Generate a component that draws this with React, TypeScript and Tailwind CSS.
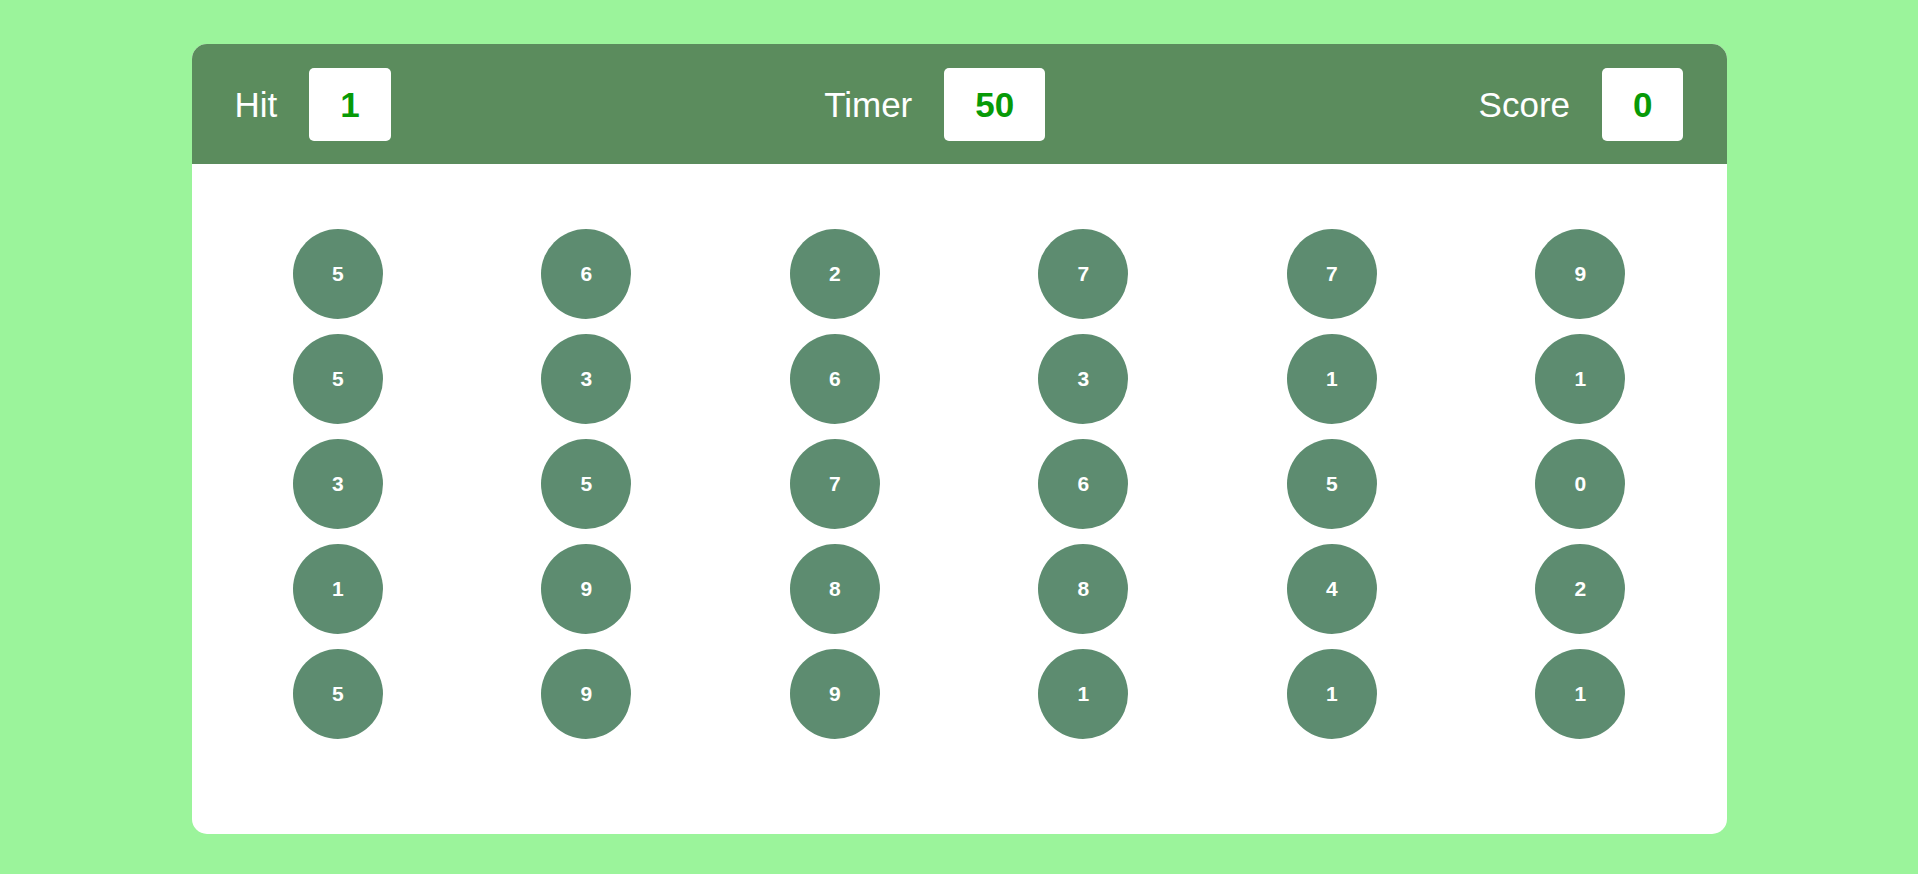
const bubbles = [
  5, 6, 2, 7, 7, 9,
  5, 3, 6, 3, 1, 1,
  3, 5, 7, 6, 5, 0,
  1, 9, 8, 8, 4, 2,
  5, 9, 9, 1, 1, 1,
];

function Stat({ label, value }: { label: string; value: string | number }) {
  return (
    <div className="flex items-center gap-[32px]">
      <span className="text-[35px] leading-none text-white">{label}</span>
      <div className="flex h-[73px] items-center rounded-[5px] bg-white px-[31px] text-[35px] font-bold leading-none text-[#079a07]">
        {value}
      </div>
    </div>
  );
}

export default function App() {
  return (
    <div
      className="flex min-h-[874px] w-full justify-center bg-[#9bf49b] pt-[44px]"
      style={{ fontFamily: '"Liberation Sans", Arial, sans-serif' }}
    >
      <div className="h-[790px] w-[1535px] overflow-hidden rounded-[15px] bg-white">
        {/* Top bar */}
        <div className="flex h-[120px] items-center justify-between bg-[#5b8c5d] pl-[43px] pr-[43px]">
          <Stat label="Hit" value={1} />
          <Stat label="Timer" value={50} />
          <Stat label="Score" value={0} />
        </div>

        {/* Bubbles */}
        <div className="grid grid-cols-6 gap-y-[15px] px-[22px] pt-[65px]">
          {bubbles.map((n, i) => (
            <div key={i} className="flex justify-center">
              <div className="flex h-[90px] w-[90px] items-center justify-center rounded-full bg-[#5d8c70] text-[21px] font-bold text-white">
                {n}
              </div>
            </div>
          ))}
        </div>
      </div>
    </div>
  );
}
